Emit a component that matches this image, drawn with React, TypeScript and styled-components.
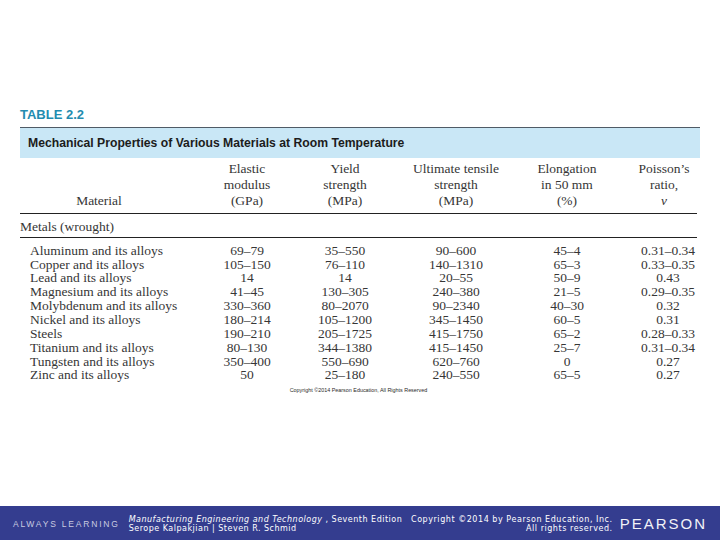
import React from "react";
import styled, { createGlobalStyle } from "styled-components";

const GlobalStyle = createGlobalStyle`
  html, body {
    margin: 0;
    padding: 0;
    background: #ffffff;
  }
  body {
    width: 720px;
    height: 540px;
    overflow: hidden;
  }
`;

interface MaterialRow {
  name: string;
  values: string[];
}

const rows: MaterialRow[] = [
  { name: "Aluminum and its alloys", values: ["69–79", "35–550", "90–600", "45–4", "0.31–0.34"] },
  { name: "Copper and its alloys", values: ["105–150", "76–110", "140–1310", "65–3", "0.33–0.35"] },
  { name: "Lead and its alloys", values: ["14", "14", "20–55", "50–9", "0.43"] },
  { name: "Magnesium and its alloys", values: ["41–45", "130–305", "240–380", "21–5", "0.29–0.35"] },
  { name: "Molybdenum and its alloys", values: ["330–360", "80–2070", "90–2340", "40–30", "0.32"] },
  { name: "Nickel and its alloys", values: ["180–214", "105–1200", "345–1450", "60–5", "0.31"] },
  { name: "Steels", values: ["190–210", "205–1725", "415–1750", "65–2", "0.28–0.33"] },
  { name: "Titanium and its alloys", values: ["80–130", "344–1380", "415–1450", "25–7", "0.31–0.34"] },
  { name: "Tungsten and its alloys", values: ["350–400", "550–690", "620–760", "0", "0.27"] },
  { name: "Zinc and its alloys", values: ["50", "25–180", "240–550", "65–5", "0.27"] },
];

const headers: string[][] = [
  ["Elastic", "modulus", "(GPa)"],
  ["Yield", "strength", "(MPa)"],
  ["Ultimate tensile", "strength", "(MPa)"],
  ["Elongation", "in 50 mm", "(%)"],
  ["Poisson’s", "ratio,", "ν"],
];

const Page = styled.div`
  display: flex;
  flex-direction: column;
  height: 540px;
`;

const Content = styled.main`
  flex: 1;
  padding: 107px 20px 0 20px;
`;

const TableLabel = styled.div`
  font-family: "Liberation Sans", Arial, sans-serif;
  font-weight: 700;
  font-size: 13px;
  line-height: 15px;
  color: #238cb0;
  margin-bottom: 5px;
`;

const TitleBar = styled.div`
  width: 680px;
  box-sizing: border-box;
  height: 31px;
  border-top: 1px solid #4f5b66;
  background: #c9e7f6;
  padding-left: 8px;
  font-family: "Liberation Sans", Arial, sans-serif;
  font-weight: 700;
  font-size: 12.2px;
  line-height: 30px;
  color: #1c1c1c;
`;

const Table = styled.div`
  width: 677px;
  font-family: "Liberation Serif", "Times New Roman", serif;
  font-size: 13.5px;
  color: #363636;
`;

const Row = styled.div`
  display: grid;
  grid-template-columns: 182px 90px 106px 116px 106px 77px;
  text-align: center;

  & > :nth-child(6) {
    padding-left: 19px;
  }
`;

const HeaderRow = styled(Row)`
  align-items: end;
  padding: 2.5px 0 4px;
  line-height: 16px;
  border-bottom: 1px solid #222;

  & > :nth-child(6) {
    padding-left: 11px;
  }
`;

const MaterialHead = styled.div`
  text-align: center;
  padding-right: 24px;
`;

const GroupRow = styled.div`
  padding: 5px 0 3.5px;
  line-height: 15px;
  border-bottom: 1px solid #222;
`;

const Body = styled.div`
  padding-top: 5.8px;
`;

const DataRow = styled(Row)`
  line-height: 13.85px;
`;

const MaterialName = styled.div`
  text-align: left;
  padding-left: 10px;
`;

const Credit = styled.div`
  width: 677px;
  margin-top: 5px;
  text-align: center;
  font-family: "Liberation Sans", Arial, sans-serif;
  font-size: 5.4px;
  line-height: 6px;
  color: #2a2a2a;
`;

const Footer = styled.footer`
  height: 34px;
  display: flex;
  align-items: center;
  padding: 0 13px;
  background: #343d8f;
  color: #ffffff;
`;

const Tagline = styled.div`
  font-family: "Liberation Sans", Arial, sans-serif;
  font-size: 8.5px;
  letter-spacing: 1.8px;
  color: #c9cbe0;
  padding-top: 1px;
`;

const TextBlock = styled.div<{ $align?: "left" | "right"; $spacing: number }>`
  font-family: "DejaVu Sans", Verdana, sans-serif;
  font-size: 8px;
  line-height: 9px;
  padding-top: 2px;
  letter-spacing: ${(p) => p.$spacing}px;
  text-align: ${(p) => p.$align ?? "left"};
  white-space: nowrap;
`;

const BookInfo = styled(TextBlock)`
  margin-left: 9px;
`;

const Rights = styled(TextBlock)`
  margin-left: auto;
`;

const Logo = styled.div`
  margin-left: 7px;
  font-family: "Liberation Sans", Arial, sans-serif;
  font-size: 15px;
  letter-spacing: 2px;
  color: #f2f2f7;
  line-height: 15px;
`;

const App: React.FC = () => {
  return (
    <Page>
      <GlobalStyle />
      <Content>
        <TableLabel>TABLE 2.2</TableLabel>
        <TitleBar>Mechanical Properties of Various Materials at Room Temperature</TitleBar>
        <Table>
          <HeaderRow>
            <MaterialHead>Material</MaterialHead>
            {headers.map((lines, i) => (
              <div key={i}>
                {lines.map((l, j) => (
                  <div key={j}>{j === 2 && i === 4 ? <i>{l}</i> : l}</div>
                ))}
              </div>
            ))}
          </HeaderRow>
          <GroupRow>Metals (wrought)</GroupRow>
          <Body>
            {rows.map((r) => (
              <DataRow key={r.name}>
                <MaterialName>{r.name}</MaterialName>
                {r.values.map((v, i) => (
                  <div key={i}>{v}</div>
                ))}
              </DataRow>
            ))}
          </Body>
          <Credit>Copyright ©2014 Pearson Education, All Rights Reserved</Credit>
        </Table>
      </Content>
      <Footer>
        <Tagline>ALWAYS LEARNING</Tagline>
        <BookInfo $spacing={0.5}>
          <div>
            <i>Manufacturing Engineering and Technology</i> , Seventh Edition
          </div>
          <div>Serope Kalpakjian | Steven R. Schmid</div>
        </BookInfo>
        <Rights $align="right" $spacing={0.55}>
          <div>Copyright ©2014 by Pearson Education, Inc.</div>
          <div>All rights reserved.</div>
        </Rights>
        <Logo>PEARSON</Logo>
      </Footer>
    </Page>
  );
};

export default App;
